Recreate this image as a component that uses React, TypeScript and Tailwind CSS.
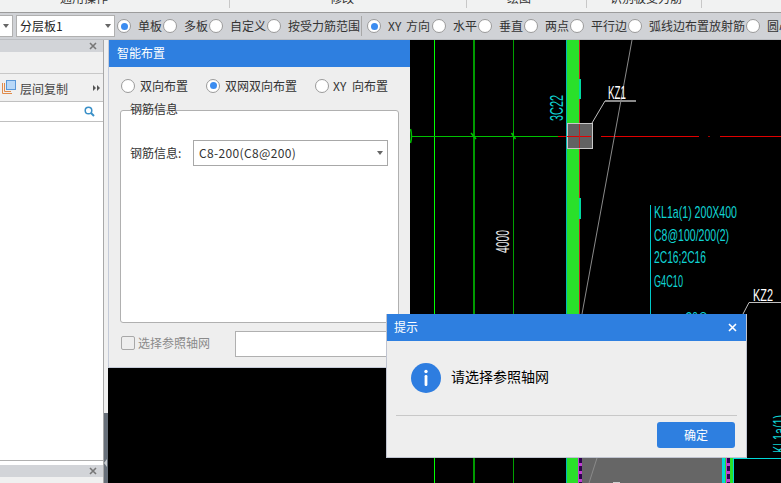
const FONT = "font-['Noto_Sans_CJK_SC','Noto_Sans',sans-serif]";

function Radio({ checked, size = 14, bg = "bg-white" }: { checked?: boolean; size?: number; bg?: string }) {
  return (
    <span
      style={{ width: size, height: size }}
      className={`flex shrink-0 items-center justify-center rounded-full border border-[#9a9a9a] ${bg}`}
    >
      {checked && <span className="h-[7px] w-[7px] rounded-full bg-[#3b8cf0]" />}
    </span>
  );
}

function ToolRadio({ label, checked, w }: { label: string; checked?: boolean; w: number }) {
  return (
    <div className="flex shrink-0 items-center gap-[7px]" style={{ width: w }}>
      <Radio checked={checked} />
      <span className="whitespace-nowrap text-xs leading-none text-[#333]">{label}</span>
    </div>
  );
}

function Caret() {
  return <span className="h-0 w-0 border-x-[3.5px] border-t-[4px] border-x-transparent border-t-[#666]" />;
}

function CadText({ x, y, w, children, fill = "#10d4d4", size = 17, rotate }: { x: number; y: number; w: number; children: string; fill?: string; size?: number; rotate?: boolean }) {
  return (
    <text
      x={x}
      y={y}
      fontSize={size}
      fontFamily="Liberation Sans, sans-serif"
      fill={fill}
      textLength={w}
      lengthAdjust="spacingAndGlyphs"
      transform={rotate ? `rotate(-90 ${x} ${y})` : undefined}
    >
      {children}
    </text>
  );
}

function Drawing() {
  return (
    <svg className="absolute inset-0 h-full w-full" viewBox="108 40 673 443" shapeRendering="crispEdges">
      <rect x="108" y="40" width="673" height="443" fill="#000" />
      <rect x="582" y="440" width="141" height="43" fill="#666" />
      <line x1="434.5" y1="40" x2="434.5" y2="483" stroke="#00ff00" />
      <line x1="474" y1="40" x2="474" y2="483" stroke="#009a00" strokeWidth="1.5" />
      <line x1="513.5" y1="40" x2="513.5" y2="483" stroke="#00a000" />
      <line x1="411" y1="136.5" x2="558" y2="136.5" stroke="#00c000" strokeWidth="1.5" />
      <line x1="558" y1="136.5" x2="591" y2="136.5" stroke="#e00000" strokeWidth="1.5" />
      <line x1="601" y1="136.5" x2="699" y2="136.5" stroke="#e00000" strokeWidth="1.5" />
      <line x1="720" y1="136.5" x2="781" y2="136.5" stroke="#e00000" strokeWidth="1.5" />
      <rect x="708" y="136" width="2" height="1" fill="#a00000" />
      <path d="M410.5 129 Q412.5 136 410.5 143" fill="none" stroke="#00c000" strokeWidth="1.5" shapeRendering="auto" />
      <path d="M471 133 L476 139 M511.5 133 L515.5 139" stroke="#00c000" strokeWidth="1.5" shapeRendering="auto" />
      <line x1="513.5" y1="131" x2="513.5" y2="140" stroke="#00c000" />

      <rect x="567" y="40" width="12" height="443" fill="#2ae02a" />
      <rect x="566" y="40" width="1" height="443" fill="#00b8b8" />
      <rect x="579" y="40" width="1" height="443" fill="#c02020" />
      <rect x="579" y="79" width="1.5" height="20" fill="#00d8a0" />
      <rect x="579" y="198" width="1.5" height="21" fill="#00d8a0" />

      <path d="M632 40 L582 314" fill="none" stroke="#8a8a8a" shapeRendering="auto" />
      <rect x="567" y="123.5" width="25" height="25" fill="#626262" stroke="#c8c8c8" />
      <line x1="567" y1="136.5" x2="591" y2="136.5" stroke="#e00000" strokeWidth="1.5" />
      <line x1="579.5" y1="124" x2="579.5" y2="148" stroke="#c02020" />
      <path d="M592 123 L605 101" fill="none" stroke="#c0c0c0" shapeRendering="auto" />
      <rect x="605" y="100" width="31" height="2" fill="#8a8a8a" />
      <CadText x={608} y={99} w={18} fill="#ffffff" size={18}>KZ1</CadText>
      <CadText x={563} y={121} w={26} rotate size={18}>3C22</CadText>
      <CadText x={509} y={253} w={23} fill="#e8e8e8" rotate size={18}>4000</CadText>

      <line x1="650.5" y1="205" x2="650.5" y2="314" stroke="#00c8c8" />
      <CadText x={654} y={218} w={83}>KL1a(1) 200X400</CadText>
      <CadText x={654} y={241} w={75}>C8@100/200(2)</CadText>
      <CadText x={654} y={263} w={52}>2C16;2C16</CadText>
      <CadText x={654} y={287} w={29}>G4C10</CadText>
      <CadText x={685} y={324} w={23}>C8@</CadText>

      <path d="M743 314 L749 302.5" fill="none" stroke="#c0c0c0" shapeRendering="auto" />
      <rect x="749" y="302" width="32" height="1" fill="#c0c0c0" />
      <CadText x={753} y={301} w={20} fill="#ffffff" size={17}>KZ2</CadText>
      <CadText x={786} y={453} w={38} rotate size={18}>KL1a(1)</CadText>

      <path d="M597 458 L589 483" fill="none" stroke="#8a8a8a" shapeRendering="auto" />
      <rect x="613" y="482" width="7" height="1" fill="#d0d0d0" />

      <rect x="578" y="458" width="4" height="25" fill="#c040d0" />
      <path d="M580 458 V483" stroke="#300050" strokeWidth="3" strokeDasharray="5 3" />
      <rect x="722" y="458" width="3" height="25" fill="#00d8d8" />
      <rect x="725" y="458" width="1" height="25" fill="#2ae02a" />
      <rect x="726" y="458" width="4" height="25" fill="#c040d0" />
      <path d="M728 458 V483" stroke="#300050" strokeWidth="3" strokeDasharray="5 3" />
      <rect x="730" y="458" width="3" height="25" fill="#2ae02a" />
      <rect x="733" y="458" width="1" height="25" fill="#00d8d8" />
      <rect x="733" y="458" width="48" height="1" fill="#00d8d8" />
    </svg>
  );
}

function SettingsDialog() {
  return (
    <div className="absolute left-0 top-0 flex h-[328px] w-[302px] flex-col border-b border-l border-[#c5cbd8] bg-[#eeeeee]">
      <div className="flex h-[27px] shrink-0 items-center bg-[#2e7fe0] pb-[1px] pl-[8px] text-xs text-white">智能布置</div>
      <div className="flex h-[38px] shrink-0 items-center pb-[1px] pl-[12px] text-xs text-[#333]">
        <div className="flex w-[85px] items-center gap-[5px]"><Radio />双向布置</div>
        <div className="flex w-[109px] items-center gap-[5px]"><Radio checked />双网双向布置</div>
        <div className="flex items-center gap-[4px] [word-spacing:3px]"><Radio />XY 向布置</div>
      </div>
      <div className="relative ml-[11px] mt-[5px] h-[213px] w-[279px] rounded-[3px] border border-[#b0b0b0] bg-white">
        <span className="absolute left-[9px] top-[-10px] text-xs leading-[16px] text-[#333]">钢筋信息</span>
        <div className="mt-[29px] flex items-center pl-[9px] text-xs text-[#333]">
          <span className="w-[63px]">钢筋信息:</span>
          <div className="flex h-[26px] w-[195px] items-center justify-between border border-[#a8a8a8] bg-white pl-[5px] pr-[4px]">
            <span className="tracking-[0.35px]">C8-200(C8@200)</span>
            <Caret />
          </div>
        </div>
      </div>
      <div className="ml-[12px] mt-[6px] flex items-center text-xs text-[#8a8a8a]">
        <span className="h-[14px] w-[14px] rounded-[2px] border border-[#a8a8a8]" />
        <span className="ml-[3px] w-[97px]">选择参照轴网</span>
        <div className="mt-[2px] h-[26px] w-[170px] border border-[#b0b0b0] bg-white" />
      </div>
    </div>
  );
}

function AlertDialog() {
  return (
    <div className="absolute left-[278px] top-[274px] flex h-[144px] w-[361px] flex-col border-x border-b border-[#c0c4d0] bg-[#eeeeee]">
      <div className="flex h-[27px] shrink-0 items-center justify-between bg-[#2e7fe0] pl-[7px] pr-[9px] text-xs text-white">
        <span className="-translate-y-px">提示</span>
        <svg width="9" height="9" viewBox="0 0 9 9"><path d="M1 1 L8 8 M8 1 L1 8" stroke="#fff" strokeWidth="1.6" /></svg>
      </div>
      <div className="flex h-[74px] shrink-0 items-center pl-[24px]">
        <svg width="30" height="30" viewBox="0 0 30 30" className="shrink-0">
          <circle cx="15" cy="15" r="15" fill="#2e7de0" />
          <circle cx="15" cy="8.5" r="1.7" fill="#fff" />
          <rect x="13.6" y="12" width="2.8" height="11" rx="1.2" fill="#fff" />
        </svg>
        <span className="ml-[10px] -translate-y-[2px] text-sm leading-none text-black">请选择参照轴网</span>
      </div>
      <div className="mx-[9px] h-px bg-[#c8c8c8]" />
      <div className="flex justify-end pr-[11px] pt-[6px]">
        <button className="flex h-[26px] w-[78px] items-center justify-center rounded-[3px] bg-[#2e7fe0] text-xs text-white">确定</button>
      </div>
    </div>
  );
}

function CloseX() {
  return <svg width="8" height="8" viewBox="0 0 8 8"><path d="M1 1 L7 7 M7 1 L1 7" stroke="#777" strokeWidth="1.6" /></svg>;
}

function LeftPanel() {
  return (
    <div className="flex w-[104px] shrink-0 flex-col border-r border-[#a8a8a8] bg-white">
      <div className="flex h-[12px] shrink-0 items-center justify-end bg-[#d2d4d8] pr-[6px]"><CloseX /></div>
      <div className="h-[22px] shrink-0 border-b border-[#c8c8c8] bg-[#f0f0f0]" />
      <div className="flex h-[28px] shrink-0 items-center border-b border-[#c0c0c0] bg-[#f0f0f0] pr-[3px]">
        <svg width="15" height="15" viewBox="0 0 15 15" className="ml-[1px] shrink-0">
          <path d="M1.5 3 V13.5 H11" fill="none" stroke="#e08a4a" />
          <path d="M3.5 3 V11.5 H10" fill="none" stroke="#e08a4a" />
          <rect x="5.5" y="0.5" width="9" height="9" fill="#b8d8f8" stroke="#5a98d8" />
        </svg>
        <span className="ml-[4px] translate-y-px text-xs text-[#444]">层间复制</span>
        <span className="ml-auto flex gap-px">
          <span className="h-0 w-0 border-y-[3px] border-l-[3.5px] border-y-transparent border-l-[#555]" />
          <span className="h-0 w-0 border-y-[3px] border-l-[3.5px] border-y-transparent border-l-[#555]" />
        </span>
      </div>
      <div className="flex h-[20px] shrink-0 items-center justify-end border-b border-[#c0c0c0] pr-[8px]">
        <svg width="11" height="11" viewBox="0 0 11 11"><circle cx="4.5" cy="4.5" r="3.3" fill="none" stroke="#3a90c8" strokeWidth="1.5" /><path d="M7 7 L10 10" stroke="#3a90c8" strokeWidth="2" /></svg>
      </div>
      <div className="flex-1 border-b border-[#b0b0b0]" />
      <div className="h-[4px] shrink-0 bg-white" />
      <div className="flex h-[12px] shrink-0 items-center justify-end bg-[#d2d4d8] pr-[6px]"><CloseX /></div>
      <div className="h-[6px] shrink-0 bg-[#f0f0f0]" />
    </div>
  );
}

function Splitter() {
  return (
    <div className="flex w-[4px] shrink-0 flex-col bg-[#f0f0f0]">
      <div className="flex-1" />
      <div className="flex h-[70px] shrink-0 items-center bg-[#68707a] pb-[10px] pt-[40px]">
        <span className="h-0 w-0 border-y-[4px] border-r-[3px] border-y-transparent border-r-[#c8ccd0]" />
      </div>
    </div>
  );
}

function RibbonGroup({ w, pl, label, arrow = true }: { w: number; pl: number; label: string; arrow?: boolean }) {
  return (
    <div className="relative h-[12px] shrink-0 overflow-hidden" style={{ width: w, paddingLeft: pl }}>
      <span className="absolute top-[-11px] flex items-center gap-[6px] whitespace-nowrap leading-[18px]">
        {label}
        {arrow && <Caret />}
      </span>
      <span className="absolute right-0 top-0 h-[8px] w-px bg-[#c8c8c8]" />
    </div>
  );
}

export default function App() {
  return (
    <div className={`flex h-[483px] w-[781px] flex-col overflow-hidden bg-[#f0f0f0] ${FONT}`}>
      <div className="flex h-[13px] shrink-0 overflow-hidden border-b border-[#9c9c9c] bg-[#f1f2f2] text-xs text-[#333]">
        <RibbonGroup w={230} pl={60} label="通用操作" />
        <RibbonGroup w={237} pl={100} label="修改" />
        <RibbonGroup w={120} pl={40} label="绘图" />
        <RibbonGroup w={115} pl={23} label="识别板受力筋" arrow={false} />
      </div>

      <div className="flex h-[27px] shrink-0 items-center overflow-hidden border-b border-[#bcbec2] bg-[#d0d2d6]">
        <div className="flex h-[22px] w-[13px] shrink-0 items-center justify-end border-y border-r border-[#b0b0b0] bg-white pr-[3px]"><Caret /></div>
        <div className="ml-[3px] flex h-[22px] w-[99px] shrink-0 items-center justify-between border border-[#b0b0b0] bg-white pl-[3px] pr-[3px] leading-none text-[#222]">
          <span className="text-xs">分层板1</span>
          <Caret />
        </div>
        <div className="ml-[2px] flex items-center">
          <ToolRadio w={46} checked label="单板" />
          <ToolRadio w={46} label="多板" />
          <ToolRadio w={58} label="自定义" />
          <ToolRadio w={94} label="按受力筋范围" />
          <div className="flex w-[71px] shrink-0 items-center gap-[7px] border-l border-[#a8a8a8] pl-[5px]"><Radio checked /><span className="whitespace-nowrap text-xs leading-[20px] text-[#333] [word-spacing:2px]">XY 方向</span></div>
          <ToolRadio w={46} label="水平" />
          <ToolRadio w={46} label="垂直" />
          <ToolRadio w={46} label="两点" />
          <ToolRadio w={58} label="平行边" />
          <ToolRadio w={118} label="弧线边布置放射筋" />
          <ToolRadio w={60} label="圆心布置放射筋" />
        </div>
      </div>

      <div className="flex min-h-0 flex-1">
        <LeftPanel />
        <Splitter />
        <div className="relative flex-1 overflow-hidden bg-black">
          <Drawing />
          <SettingsDialog />
          <AlertDialog />
        </div>
      </div>
    </div>
  );
}
